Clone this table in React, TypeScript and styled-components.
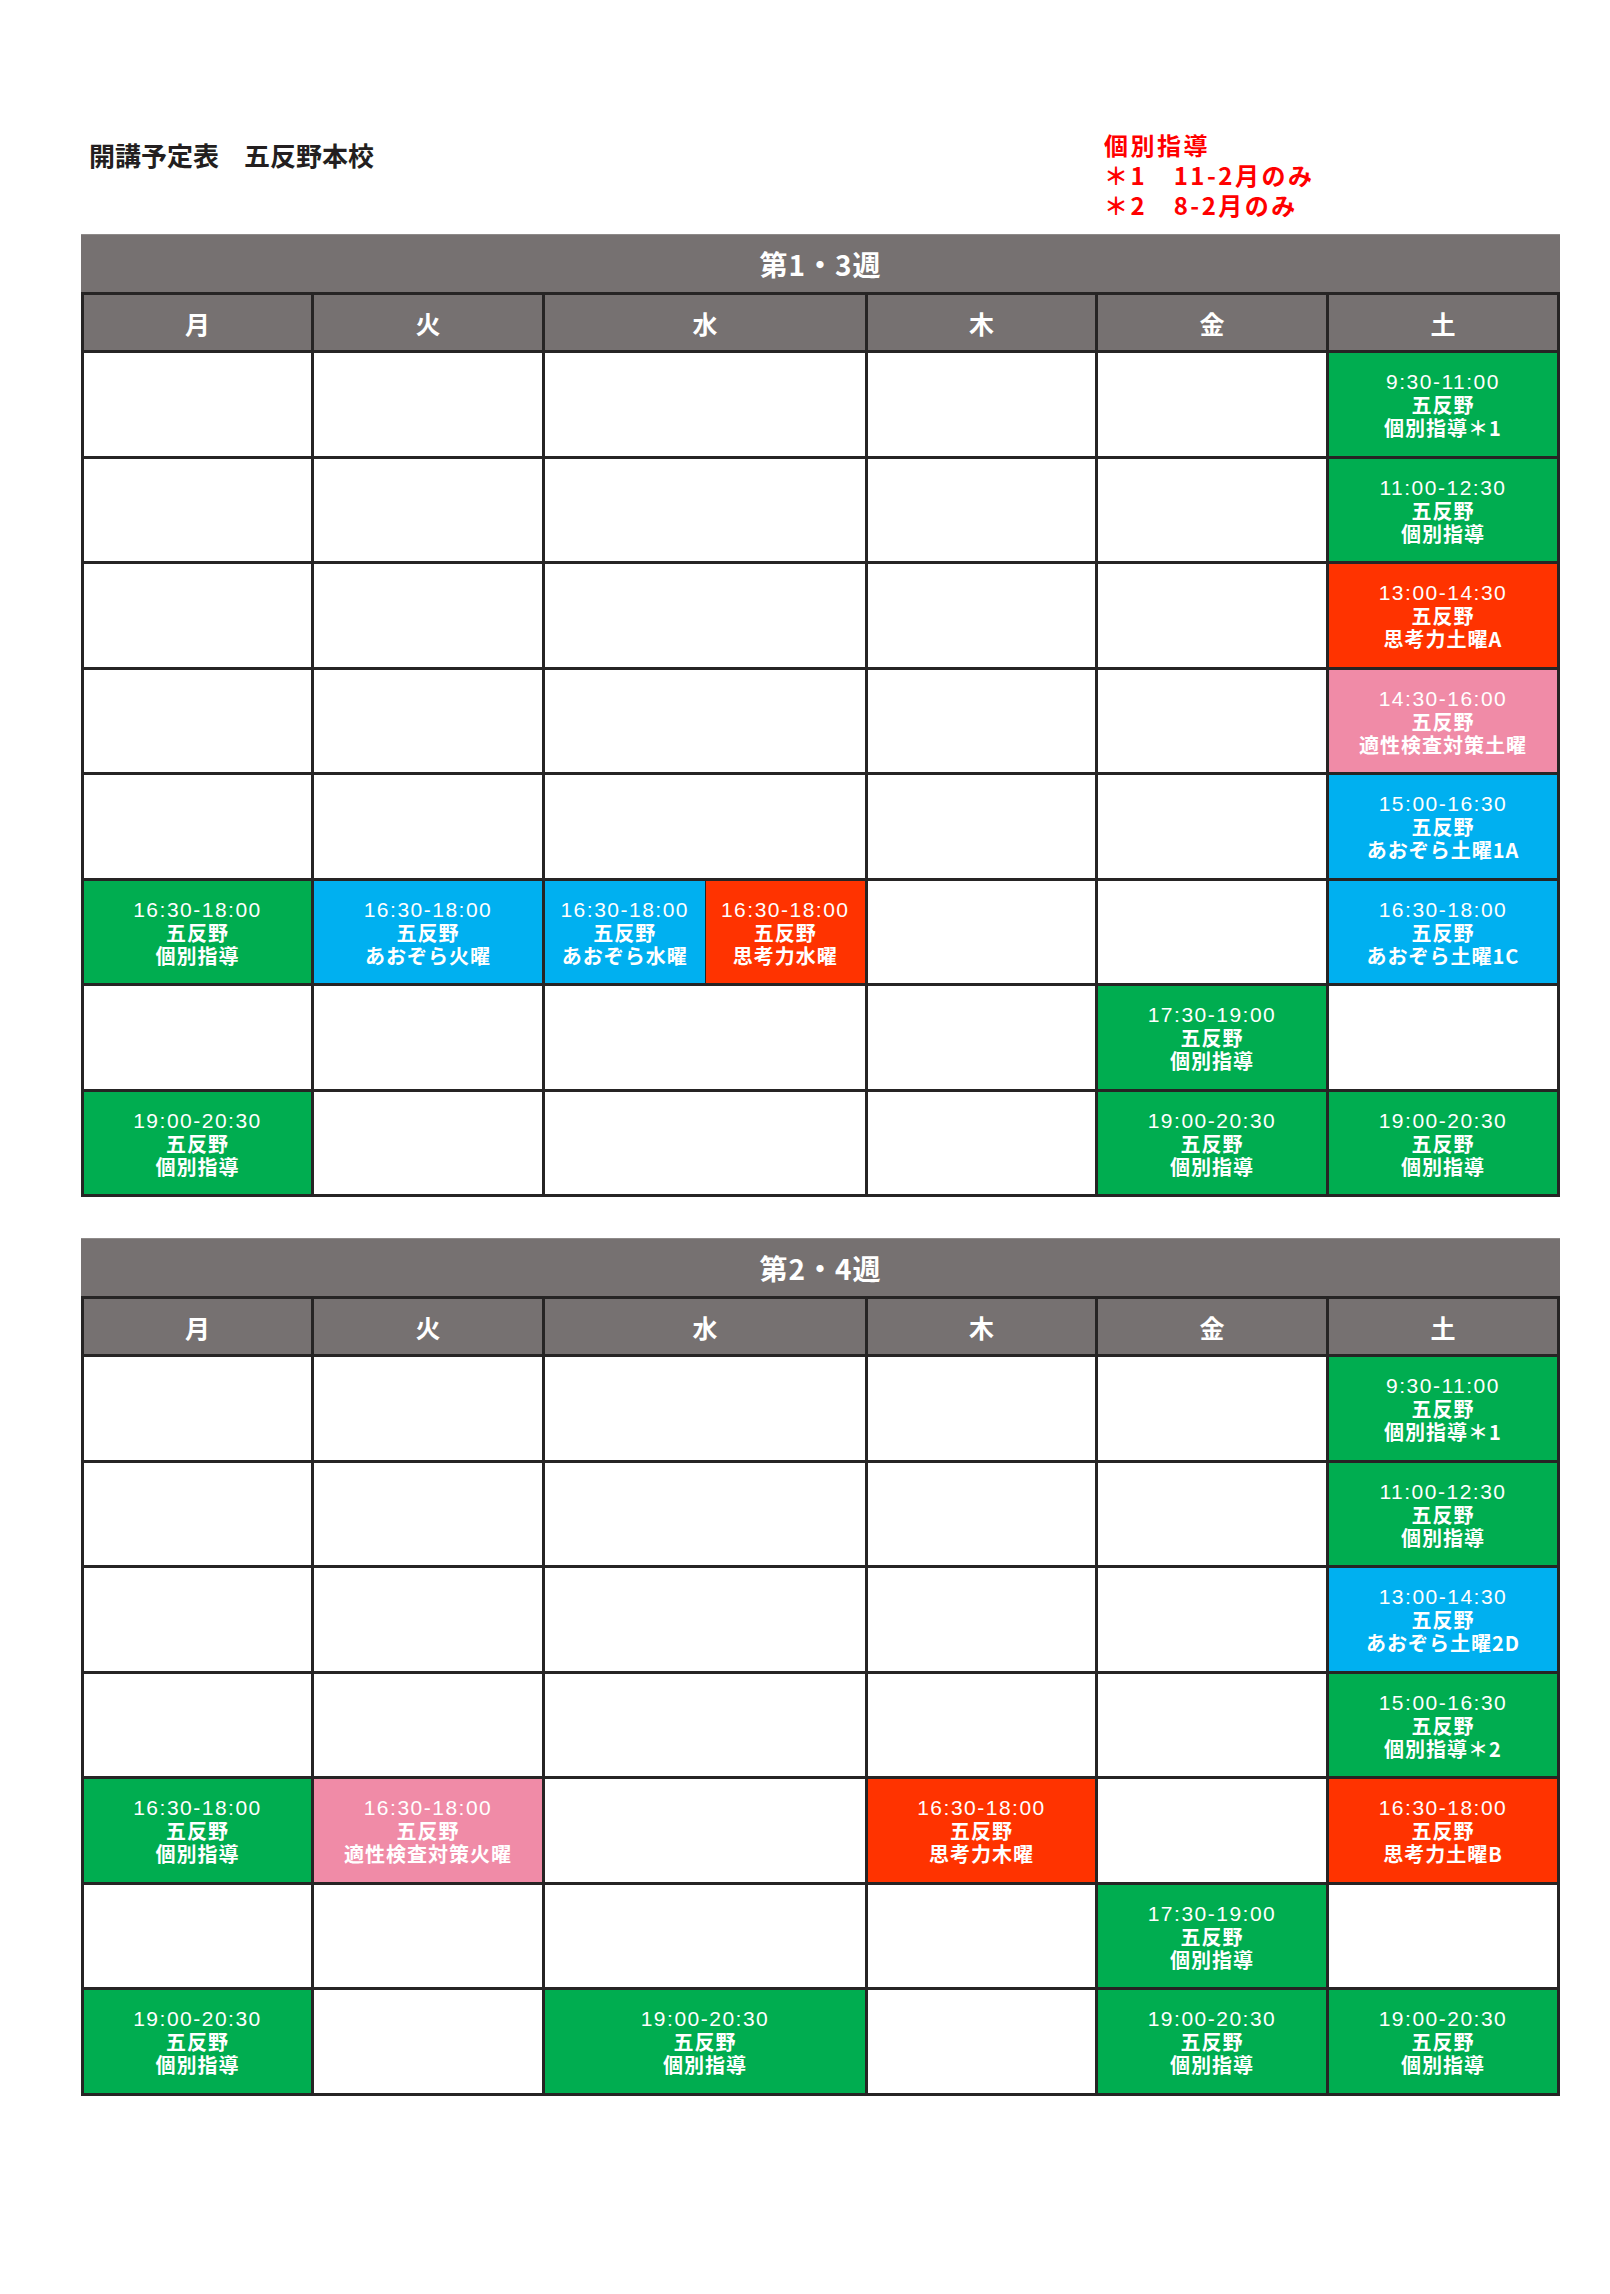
import React from "react";
import styled, { createGlobalStyle } from "styled-components";

type Tone = "green" | "red" | "pink" | "blue";
type Slot = { time: string; name: string; tone: Tone };
type Entry = null | Slot | Slot[];

const TONES: Record<Tone, string> = {
  green: "#00ad50",
  red: "#ff3300",
  pink: "#f08ba7",
  blue: "#00b0f0",
};

const GlobalStyle = createGlobalStyle`
  html, body {
    margin: 0;
    padding: 0;
    background: #ffffff;
  }
  body {
    font-family: "Noto Sans CJK JP", "Noto Sans", sans-serif;
  }
`;

const Page = styled.div`
  width: 1479px;
  padding: 130px 0 0 81px;
`;

const Header = styled.header`
  display: grid;
  grid-template-columns: 1023px 1fr;
  height: 104px;
`;

const Title = styled.h1`
  margin: 10px 0 0 8px;
  display: flex;
  gap: 25px;
  font-size: 26px;
  line-height: 30px;
  font-weight: 700;
  color: #231f20;
`;

const Note = styled.div`
  color: #ff0000;
  font-size: 24px;
  line-height: 30px;
  font-weight: 700;
  letter-spacing: 2.5px;
  white-space: pre;
`;

const Tables = styled.div`
  display: flex;
  flex-direction: column;
  gap: 41px;
`;

const Grid = styled.div`
  display: grid;
  grid-template-columns: 227px 228px 320px 227px 228px 228px;
  grid-template-rows: 58px 55px;
  grid-auto-rows: 102.5px;
  gap: 3px;
  padding: 0 3px 3px;
  background: #262424;
`;

const WeekBar = styled.div`
  grid-column: 1 / -1;
  margin: 0 -3px;
  background: #767171;
  border-top: 1px solid #8e8a89;
  color: #ffffff;
  font-size: 28px;
  font-weight: 700;
  display: flex;
  align-items: center;
  justify-content: center;
  letter-spacing: 1px;
`;

const DayHead = styled.div`
  background: #767171;
  color: #ffffff;
  font-size: 25px;
  font-weight: 700;
  display: flex;
  align-items: center;
  justify-content: center;
`;

const Cell = styled.div<{ $tone?: Tone }>`
  background: ${(p) => (p.$tone ? TONES[p.$tone] : "#ffffff")};
  color: #ffffff;
  display: flex;
  flex-direction: column;
  align-items: center;
  justify-content: center;
  text-align: center;
  padding-top: 1px;
`;

const SplitCell = styled.div`
  display: flex;
  gap: 1px;
  background: #262424;
`;

const Half = styled(Cell)`
  flex: 1;
`;

const Time = styled.div`
  font-family: "Liberation Sans", Arial, sans-serif;
  font-size: 21px;
  line-height: 23px;
  letter-spacing: 1.5px;
`;

const Line = styled.div`
  font-size: 20px;
  line-height: 23px;
  font-weight: 700;
  letter-spacing: 1px;
  white-space: nowrap;
`;

const DAYS = ["月", "火", "水", "木", "金", "土"];

const s = (time: string, name: string, tone: Tone): Slot => ({ time, name, tone });

const WEEK13: Entry[][] = [
  [null, null, null, null, null, s("9:30-11:00", "個別指導＊1", "green")],
  [null, null, null, null, null, s("11:00-12:30", "個別指導", "green")],
  [null, null, null, null, null, s("13:00-14:30", "思考力土曜A", "red")],
  [null, null, null, null, null, s("14:30-16:00", "適性検査対策土曜", "pink")],
  [null, null, null, null, null, s("15:00-16:30", "あおぞら土曜1A", "blue")],
  [
    s("16:30-18:00", "個別指導", "green"),
    s("16:30-18:00", "あおぞら火曜", "blue"),
    [s("16:30-18:00", "あおぞら水曜", "blue"), s("16:30-18:00", "思考力水曜", "red")],
    null,
    null,
    s("16:30-18:00", "あおぞら土曜1C", "blue"),
  ],
  [null, null, null, null, s("17:30-19:00", "個別指導", "green"), null],
  [
    s("19:00-20:30", "個別指導", "green"),
    null,
    null,
    null,
    s("19:00-20:30", "個別指導", "green"),
    s("19:00-20:30", "個別指導", "green"),
  ],
];

const WEEK24: Entry[][] = [
  [null, null, null, null, null, s("9:30-11:00", "個別指導＊1", "green")],
  [null, null, null, null, null, s("11:00-12:30", "個別指導", "green")],
  [null, null, null, null, null, s("13:00-14:30", "あおぞら土曜2D", "blue")],
  [null, null, null, null, null, s("15:00-16:30", "個別指導＊2", "green")],
  [
    s("16:30-18:00", "個別指導", "green"),
    s("16:30-18:00", "適性検査対策火曜", "pink"),
    null,
    s("16:30-18:00", "思考力木曜", "red"),
    null,
    s("16:30-18:00", "思考力土曜B", "red"),
  ],
  [null, null, null, null, s("17:30-19:00", "個別指導", "green"), null],
  [
    s("19:00-20:30", "個別指導", "green"),
    null,
    s("19:00-20:30", "個別指導", "green"),
    null,
    s("19:00-20:30", "個別指導", "green"),
    s("19:00-20:30", "個別指導", "green"),
  ],
];

const SlotBody: React.FC<{ slot: Slot }> = ({ slot }) => (
  <>
    <Time>{slot.time}</Time>
    <Line>五反野</Line>
    <Line>{slot.name}</Line>
  </>
);

const renderEntry = (e: Entry, key: string) => {
  if (e === null) return <Cell key={key} />;
  if (Array.isArray(e)) {
    return (
      <SplitCell key={key}>
        {e.map((slot, i) => (
          <Half key={i} $tone={slot.tone}>
            <SlotBody slot={slot} />
          </Half>
        ))}
      </SplitCell>
    );
  }
  return (
    <Cell key={key} $tone={e.tone}>
      <SlotBody slot={e} />
    </Cell>
  );
};

const Schedule: React.FC<{ title: string; rows: Entry[][] }> = ({ title, rows }) => (
  <Grid>
    <WeekBar>{title}</WeekBar>
    {DAYS.map((d) => (
      <DayHead key={d}>{d}</DayHead>
    ))}
    {rows.map((row, r) => row.map((e, c) => renderEntry(e, `${r}-${c}`)))}
  </Grid>
);

export default function App() {
  return (
    <>
      <GlobalStyle />
      <Page>
        <Header>
          <Title>
            <span>開講予定表</span>
            <span>五反野本校</span>
          </Title>
          <Note>{"個別指導\n＊1　11-2月のみ\n＊2　8-2月のみ"}</Note>
        </Header>
        <Tables>
          <Schedule title="第1・3週" rows={WEEK13} />
          <Schedule title="第2・4週" rows={WEEK24} />
        </Tables>
      </Page>
    </>
  );
}
